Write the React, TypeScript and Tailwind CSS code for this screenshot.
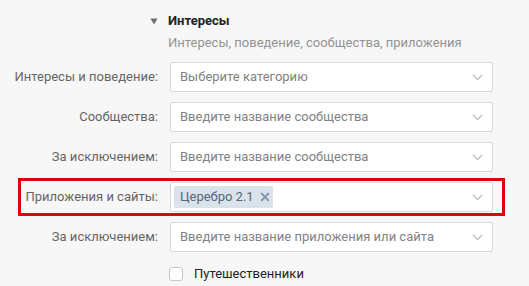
import React from 'react';

const Chevron: React.FC = () => (
    <svg width="11" height="7" viewBox="0 0 11 7" className="shrink-0">
        <path d="M0.8 1l4.7 4.4L10.2 1" fill="none" stroke="#b6bec7" strokeWidth="1.3" />
    </svg>
);

const Field: React.FC<{ placeholder?: string; children?: React.ReactNode }> = ({ placeholder, children }) => (
    <div className="ml-[12px] w-[323px] h-[30px] bg-white border border-[#d3d9de] rounded-[2px] flex items-center pl-[9px] pr-[9px]">
        <div className="flex-1 flex items-center text-[#828282] truncate">
            {children ?? placeholder}
        </div>
        <Chevron />
    </div>
);

const Row: React.FC<{ label: string; placeholder?: string }> = ({ label, placeholder }) => (
    <div className="flex items-center">
        <div className="w-[158px] text-right text-[#656565]">{label}</div>
        <Field placeholder={placeholder} />
    </div>
);

export default function App() {
    return (
        <div
            className="w-[529px] h-[286px] bg-[#f7f7f7] overflow-hidden text-[13px] leading-[16px]"
            style={{ fontFamily: 'Roboto, "Noto Sans", sans-serif' }}
        >
            {/* Section header */}
            <div className="pt-[13px] pl-[150px]">
                <div className="flex items-center">
                    <svg width="8" height="7" viewBox="0 0 8 7" className="mr-[10px] mt-[1px]">
                        <path d="M0.5 0.5h7L4 6.5z" fill="#6f6f6f" />
                    </svg>
                    <span className="font-bold text-[#222]">Интересы</span>
                </div>
                <div className="pl-[18px] mt-[6px] text-[#939393]">Интересы, поведение, сообщества, приложения</div>
            </div>

            <div className="mt-[11px] flex flex-col gap-[10px]">
                <Row label="Интересы и поведение:" placeholder="Выберите категорию" />
                <Row label="Сообщества:" placeholder="Введите название сообщества" />
                <Row label="За исключением:" placeholder="Введите название сообщества" />

                {/* Highlighted row */}
                <div className="ml-[18px] w-[487px] -my-[4px] py-[1px] border-[3px] border-[#e3000b]">
                    <div className="flex items-center">
                        <div className="w-[137px] text-right text-[#656565]">Приложения и сайты:</div>
                        <div className="ml-[12px] w-[323px] h-[30px] bg-white border border-[#d3d9de] rounded-[2px] flex items-center pl-[3px] pr-[9px]">
                            <div className="flex-1 flex items-center">
                                <span className="h-[22px] w-[99px] rounded-[2px] bg-[#dae2ea] text-[#55677d] flex items-center pl-[6px]">
                                    Церебро 2.1
                                    <svg width="10" height="10" viewBox="0 0 10 10" className="ml-[6px]">
                                        <path d="M1.2 1.2l7.6 7.6M8.8 1.2l-7.6 7.6" stroke="#7f93a8" strokeWidth="1.8" />
                                    </svg>
                                </span>
                            </div>
                            <Chevron />
                        </div>
                    </div>
                </div>

                <Row label="За исключением:" placeholder="Введите название приложения или сайта" />
            </div>

            <div className="mt-[14px] pl-[169px] flex items-center">
                <span className="w-[14px] h-[14px] bg-white border border-[#c1c9d1] rounded-[3px]" />
                <span className="ml-[11px] text-[#222]">Путешественники</span>
            </div>
        </div>
    );
}
